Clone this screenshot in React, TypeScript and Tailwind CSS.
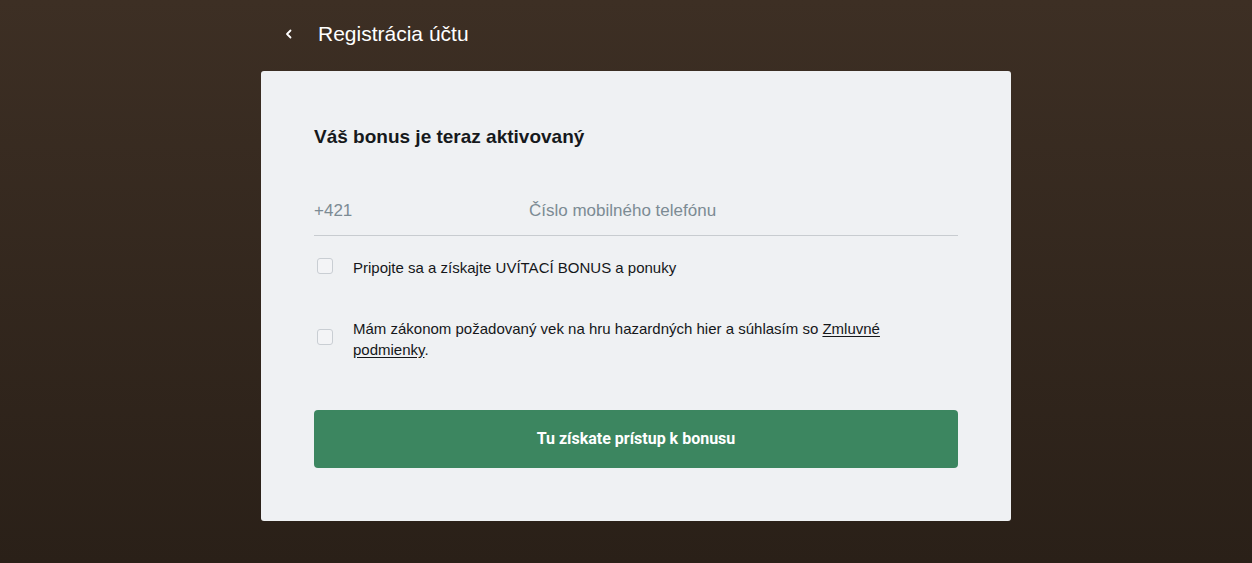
import React from 'react';

const Checkbox: React.FC<{ className?: string }> = ({ className = '' }) => (
    <span className={`h-4 w-4 shrink-0 rounded-[3px] border border-[#c9ced3] bg-[#f3f4f6] ${className}`} />
);

export default function App() {
    return (
        <div
            className="min-h-[563px] w-full bg-gradient-to-b from-[#3d2f24] to-[#2a2018] pb-[42px]"
            style={{ fontFamily: '"Liberation Sans", Arial, sans-serif' }}
        >
            <div className="ml-[261px] w-[750px]">
                {/* Header */}
                <header className="flex h-[71px] items-center pb-[4px]">
                    <button className="ml-[16px] flex h-6 w-6 items-center justify-center text-white">
                        <svg width="12" height="12" viewBox="0 0 12 12" fill="none">
                            <path d="M7.5 2.5 4 6l3.5 3.5" stroke="currentColor" strokeWidth="1.8" strokeLinecap="round" strokeLinejoin="round" />
                        </svg>
                    </button>
                    <h1 className="ml-[17px] text-[21px] font-normal text-white">Registrácia účtu</h1>
                </header>

                {/* Card */}
                <main className="rounded-[3px] bg-[#eff1f3] px-[53px] pb-[53px] pt-[52px]">
                    <h2 className="text-[19px] font-bold leading-7 text-[#16191c]">Váš bonus je teraz aktivovaný</h2>

                    <div className="mt-[36px] flex h-[49px] items-center border-b border-[#c8ccd0] text-[17px] text-[#7c8b94]">
                        <span className="w-[215px]">+421</span>
                        <span>Číslo mobilného telefónu</span>
                    </div>

                    <label className="mt-[21px] flex items-start gap-[20px] pl-[3px] text-[15px] leading-[21px] text-[#15171a]">
                        <Checkbox className="mt-[1px]" />
                        <span>Pripojte sa a získajte UVÍTACÍ BONUS a ponuky</span>
                    </label>

                    <label className="mt-[40px] flex items-center gap-[20px] pl-[3px] text-[15px] leading-[21px] text-[#15171a]">
                        <Checkbox className="-mt-[4px]" />
                        <span className="w-[560px]">
                            Mám zákonom požadovaný vek na hru hazardných hier a súhlasím so{' '}
                            <a className="underline underline-offset-2">Zmluvné</a>{' '}
                            <a className="underline underline-offset-2">podmienky</a>.
                        </span>
                    </label>

                    <button
                        className="mt-[50px] flex h-[58px] w-full items-center justify-center rounded-[4px] bg-[#3c8660] text-[16px] font-bold text-white"
                        style={{ fontFamily: 'Roboto, "Liberation Sans", sans-serif' }}
                    >
                        Tu získate prístup k bonusu
                    </button>
                </main>
            </div>
        </div>
    );
}
